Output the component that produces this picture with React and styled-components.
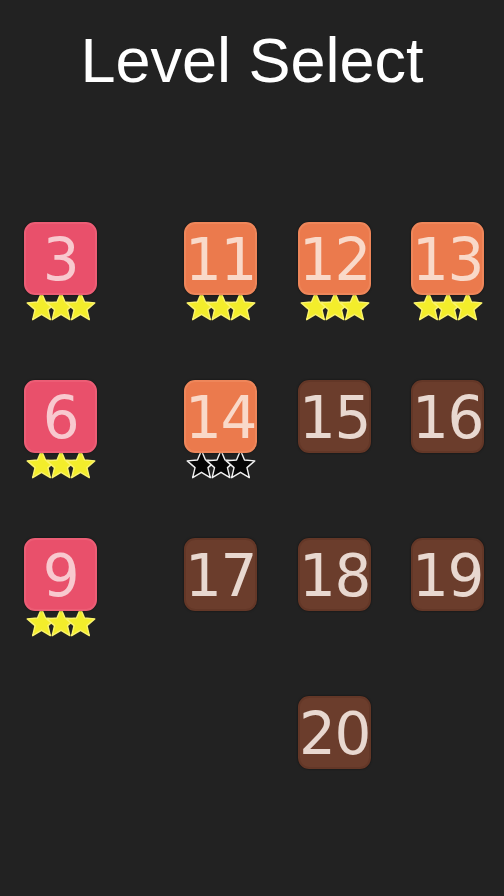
import React from "react";
import styled, { createGlobalStyle } from "styled-components";

const GlobalStyle = createGlobalStyle`
  html, body {
    margin: 0;
    padding: 0;
    background: #222222;
  }
`;

const Page = styled.div`
  width: 504px;
  height: 896px;
  background: #222222;
  overflow: hidden;
  font-family: "Liberation Sans", Arial, sans-serif;
`;

const Title = styled.h1`
  margin: 0;
  padding-top: 24px;
  height: 222px;
  box-sizing: border-box;
  text-align: center;
  color: #ffffff;
  font-size: 63px;
  font-weight: 400;
  line-height: 72px;
`;

const Grid = styled.div`
  display: grid;
  grid-template-columns: 160px 114px 113px 73px;
  grid-auto-rows: 158px;
  padding-left: 24px;
`;

const Cell = styled.div`
  grid-column: ${({ $col }) => $col};
  grid-row: ${({ $row }) => $row};
  width: 73px;
  display: flex;
  flex-direction: column;
  align-items: center;
`;

const palette = {
  done: { bg: "#e9506b", edge: "#ec5d75", text: "#f8c9cf" },
  open: { bg: "#eb7a4d", edge: "#ee865a", text: "#f9d9c9" },
  locked: { bg: "#6b3d2c", edge: "#633727", text: "#e8d8d0" },
};

const Tile = styled.div`
  position: relative;
  z-index: 1;
  width: 73px;
  height: 73px;
  box-sizing: border-box;
  border-radius: 11px;
  border: 2px solid ${({ $kind }) => palette[$kind].edge};
  background: ${({ $kind }) => palette[$kind].bg};
  box-shadow: 0 0 2px rgba(0, 0, 0, 0.6);
  color: ${({ $kind }) => palette[$kind].text};
  display: flex;
  align-items: center;
  justify-content: center;
  font-family: "DejaVu Sans", Verdana, sans-serif;
  font-size: 58px;
  letter-spacing: -1.5px;
  line-height: 1;
  padding-top: 2px;
`;

const StarRow = styled.svg`
  display: block;
  margin-top: -3px;
  position: relative;
  z-index: 0;
`;

function starPoints(cx, cy, R, r) {
  const pts = [];
  for (let i = 0; i < 10; i++) {
    const rad = i % 2 === 0 ? R : r;
    const a = (Math.PI / 5) * i - Math.PI / 2;
    pts.push(`${(cx + rad * Math.cos(a)).toFixed(2)},${(cy + rad * Math.sin(a)).toFixed(2)}`);
  }
  return pts.join(" ");
}

const Stars = ({ filled }) => (
  <StarRow width="70" height="30" viewBox="0 0 70 30">
    {[15.5, 35, 54.5].map((x) => (
      <polygon
        key={x}
        points={starPoints(x, 15.5, 15, 6.8)}
        fill={filled ? "#f3ed2b" : "#050505"}
        stroke={filled ? "#fbf46c" : "#f2f2f2"}
        strokeWidth="1.4"
        strokeLinejoin="round"
      />
    ))}
  </StarRow>
);

const levels = [
  { n: 3, col: 1, row: 1, kind: "done", stars: "full" },
  { n: 11, col: 2, row: 1, kind: "open", stars: "full" },
  { n: 12, col: 3, row: 1, kind: "open", stars: "full" },
  { n: 13, col: 4, row: 1, kind: "open", stars: "full" },
  { n: 6, col: 1, row: 2, kind: "done", stars: "full" },
  { n: 14, col: 2, row: 2, kind: "open", stars: "empty" },
  { n: 15, col: 3, row: 2, kind: "locked" },
  { n: 16, col: 4, row: 2, kind: "locked" },
  { n: 9, col: 1, row: 3, kind: "done", stars: "full" },
  { n: 17, col: 2, row: 3, kind: "locked" },
  { n: 18, col: 3, row: 3, kind: "locked" },
  { n: 19, col: 4, row: 3, kind: "locked" },
  { n: 20, col: 3, row: 4, kind: "locked" },
];

export default function App() {
  return (
    <Page>
      <GlobalStyle />
      <Title>Level Select</Title>
      <Grid>
        {levels.map((l) => (
          <Cell key={l.n} $col={l.col} $row={l.row}>
            <Tile $kind={l.kind}>{l.n}</Tile>
            {l.stars && <Stars filled={l.stars === "full"} />}
          </Cell>
        ))}
      </Grid>
    </Page>
  );
}
